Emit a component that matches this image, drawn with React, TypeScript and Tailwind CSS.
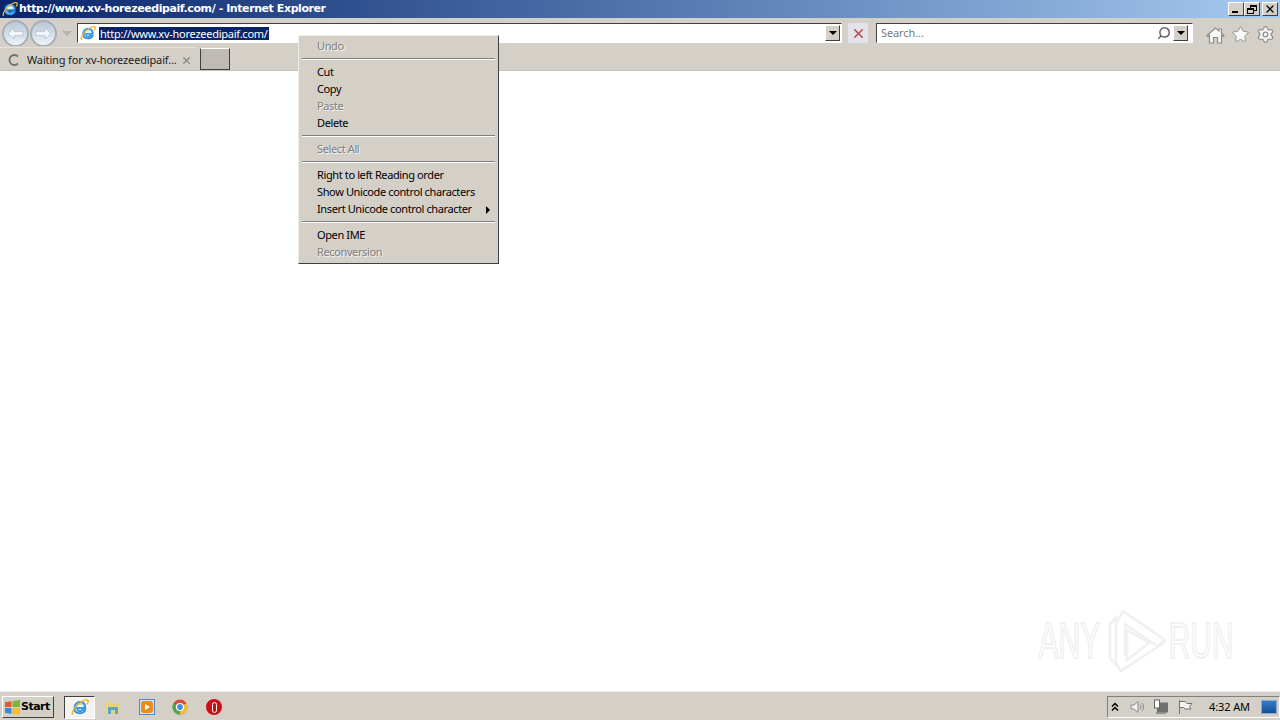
import { Search, Settings, Star, X } from "lucide-react";

function IeIcon({ size = 16 }: { size?: number }) {
  return (
    <svg width={size} height={size} viewBox="0 0 16 16" fill="none">
      <path d="M4 9h8.800c.2-3.300-1.700-5.500-4.500-5.500-3 0-5.300 2.300-5.300 5.300 0 2.900 2 4.800 5 4.800 2.300 0 4-1 4.700-2.900H9.800c-.4.700-1 1-1.700 1-1.300 0-2.100-.8-2.200-1.700" fill="#a8d8f4" stroke="#2b8fdc" strokeWidth="1.500" />
      <rect x="5.500" y="6.200" width="5" height="1.500" fill="#fff" />
      <path d="M1.500 15C-.2 12.500 5 6 9 3.500c3-1.900 6-2.600 6.300-1 .2 1-.6 2.300-1.300 3.200" stroke="#eeb52f" strokeWidth="1.300" />
    </svg>
  );
}

function NavButton({ flip }: { flip?: boolean }) {
  return (
    <div className="w-[27px] h-[27px] rounded-full border-[2px] border-[#a8aeb6] bg-gradient-to-b from-[#b9c8d8] to-[#eef3f7] flex items-center justify-center shrink-0">
      <svg width="17" height="13" viewBox="0 0 17 13" className={flip ? "rotate-180" : ""}>
        <path d="M7 .8 1 6.500 7 12.200V8.700h9V4.300H7Z" fill="#f4f7fa" stroke="#aebccb" strokeWidth=".8" />
      </svg>
    </div>
  );
}

function ComboArrow() {
  return (
    <div className="w-[15px] h-[16px] bg-[#d4d0c8] border border-t-white border-l-white border-r-[#404040] border-b-[#404040] flex items-center justify-center shrink-0">
      <div className="w-0 h-0 border-x-[4px] border-x-transparent border-t-[4px] border-t-black" />
    </div>
  );
}

function WinButton({ children, ml }: { children: React.ReactNode; ml: string }) {
  return (
    <div className={`w-[16px] h-[14px] bg-[#d4d0c8] border border-t-white border-l-white border-r-[#404040] border-b-[#404040] flex items-center justify-center ${ml}`}>
      {children}
    </div>
  );
}

function TitleBar() {
  return (
    <div className="h-[18px] flex items-center bg-gradient-to-r from-[#0a246a] to-[#a6caf0] pl-[2px] pr-[2px] shrink-0">
      <IeIcon />
      <span className="ml-[1px] mt-[1px] font-['DejaVu_Sans',sans-serif] font-bold text-[11px] tracking-[-0.42px] text-white whitespace-nowrap">
        http://www.xv-horezeedipaif.com/ - Internet Explorer
      </span>
      <div className="ml-auto flex items-center">
        <WinButton ml="">
          <div className="w-[6px] h-[2px] bg-black mt-[6px] mr-[2px]" />
        </WinButton>
        <WinButton ml="">
          <div className="relative w-[10px] h-[9px]">
            <div className="absolute right-0 top-0 w-[7px] h-[6px] border border-black border-t-2" />
            <div className="absolute left-0 bottom-0 w-[7px] h-[6px] border border-black border-t-2 bg-[#d4d0c8]" />
          </div>
        </WinButton>
        <WinButton ml="ml-[2px]">
          <X size={12} strokeWidth={2.500} color="#000" />
        </WinButton>
      </div>
    </div>
  );
}

function AddressRow() {
  return (
    <div className="h-[28px] bg-[#d4d0c8] flex items-center shrink-0 pl-[2px] pt-[2px] text-[11px]">
      <NavButton />
      <div className="ml-[1px]">
        <NavButton flip />
      </div>
      <div className="ml-[5px] w-0 h-0 border-x-[5px] border-x-transparent border-t-[5px] border-t-[#b4b4b4]" />
      <div className="ml-[5px] w-[765px] h-[20px] bg-white border border-t-[#404040] border-l-[#404040] border-b-white border-r-white flex items-center pl-[2px] pr-[1px]">
        <IeIcon />
        <span className="ml-[3px] bg-[#0a246a] text-white px-[1px] leading-[13px] tracking-[-0.25px] whitespace-nowrap">http://www.xv-horezeedipaif.com/</span>
        <div className="ml-auto">
          <ComboArrow />
        </div>
      </div>
      <div className="ml-[6px] w-[20px] h-[20px] bg-[#e4e2ea] rounded-[2px] flex items-center justify-center">
        <X size={15} strokeWidth={2.500} color="#b84a50" />
      </div>
      <div className="ml-[8px] w-[317px] h-[20px] bg-white border border-t-[#404040] border-l-[#404040] border-b-white border-r-white flex items-center pl-[4px] pr-[4px]">
        <span className="text-[#7a7a7a] tracking-[-0.1px]">Search...</span>
        <Search size={14} color="#606060" className="ml-auto mr-[2px] -scale-x-100" strokeWidth={2.500} />
        <ComboArrow />
      </div>
      <div className="ml-[13px] flex items-center gap-[6px] mt-[3px]">
        <svg width="19" height="18" viewBox="0 0 19 18" fill="#f8f8f8" stroke="#8c8c8c" strokeWidth="1.200">
          <path d="M1 9.500 9.500 2 13 5V3h2.500v4.200L18 9.500l-1 1-1.500-1.200V17h-4v-5.500h-4V17h-4V9.300L2 10.500Z" />
        </svg>
        <Star size={19} color="#8f8f8f" fill="#f8f8f8" strokeWidth={1.200} />
        <Settings size={19} color="#8f8f8f" fill="#f4f4f4" strokeWidth={1.500} />
      </div>
    </div>
  );
}

function TabRow() {
  return (
    <div className="h-[25px] bg-[#d4d0c8] border-b border-[#c8c4bc] flex items-end shrink-0 text-[11px]">
      <div className="w-[196px] h-[23px] border-t border-[#e4e1db] flex items-center pl-[8px] pr-[4px] pt-[2px]">
        <svg width="12" height="12" viewBox="0 0 12 12" fill="none">
          <path d="M10 2.500A5 5 0 1 0 10 9.500" stroke="#6f6f6f" strokeWidth="1.800" />
        </svg>
        <span className="ml-[7px] text-[#202020] tracking-[-0.15px] whitespace-nowrap">Waiting for xv-horezeedipaif...</span>
        <X size={11} strokeWidth={3} color="#8a8a8a" className="ml-auto" />
      </div>
      <div className="ml-[4px] w-[30px] h-[22px] bg-[#bfbab4] border border-t-white border-l-[#404040] border-r-[#404040] border-b-[#404040]" />
    </div>
  );
}

function MenuItem({ label, disabled, arrow }: { label: string; disabled?: boolean; arrow?: boolean }) {
  return (
    <div className={`h-[17px] flex items-center pl-[16px] pr-[6px] tracking-[-0.38px] whitespace-nowrap ${disabled ? "text-[#808080] [text-shadow:1px_1px_0_#f4f4f4]" : "text-black"}`}>
      {label}
      {arrow && <div className="ml-auto w-0 h-0 border-y-[4px] border-y-transparent border-l-[4px] border-l-black" />}
    </div>
  );
}

function MenuSep() {
  return (
    <div className="h-[9px] pt-[3px] px-[1px]">
      <div className="w-full h-[2px] border-t border-t-[#808080] border-b border-b-white" />
    </div>
  );
}

function ContextMenu() {
  return (
    <div className="absolute left-[298px] top-[35px] w-[201px] bg-[#d4d0c8] border border-t-[#f0eee9] border-l-[#f0eee9] border-r-[#404040] border-b-[#404040] p-[2px] text-[11px]">
      <MenuItem label="Undo" disabled />
      <MenuSep />
      <MenuItem label="Cut" />
      <MenuItem label="Copy" />
      <MenuItem label="Paste" disabled />
      <MenuItem label="Delete" />
      <MenuSep />
      <MenuItem label="Select All" disabled />
      <MenuSep />
      <MenuItem label="Right to left Reading order" />
      <MenuItem label="Show Unicode control characters" />
      <MenuItem label="Insert Unicode control character" arrow />
      <MenuSep />
      <MenuItem label="Open IME" />
      <MenuItem label="Reconversion" disabled />
    </div>
  );
}

function WatermarkWord({ text }: { text: string }) {
  return (
    <div className="w-[62px] flex justify-center">
      <span className="scale-x-[0.6] text-transparent [-webkit-text-stroke:2px_#f0f0f0] whitespace-nowrap">{text}</span>
    </div>
  );
}

function Watermark() {
  return (
    <div className="absolute left-[1038px] top-[610px] h-[62px] flex items-center font-['Liberation_Sans',sans-serif] text-[50px] leading-none select-none">
      <WatermarkWord text="ANY" />
      <svg width="62" height="62" viewBox="0 0 62 62" fill="none" stroke="#f0f0f0" strokeWidth="2.500" className="ml-[7px] mr-[1px]">
        <path d="M10 12 16 1 58 30 50 36 18 14V46" />
        <path d="M3 14 9 8V54L14 61 58 32" />
        <path d="M20 20 42 33 20 50Z" />
        <path d="M3 14V48L10 56" />
      </svg>
      <WatermarkWord text="RUN" />
    </div>
  );
}

function Taskbar() {
  return (
    <div className="h-[29px] bg-[#d4d0c8] border-t border-[#f2f0ec] flex items-center shrink-0 pl-[2px] pt-[2px]">
      <div className="w-[52px] h-[22px] border border-t-white border-l-white border-r-[#404040] border-b-[#404040] flex items-center pl-[1px]">
        <svg width="17" height="17" viewBox="0 0 16 16">
          <path d="M1 3 7 2V7.500H1Z" fill="#e2592a" />
          <path d="M8 2 15 1V7.500H8Z" fill="#7fb43a" />
          <path d="M1 8.500H7V14L1 13Z" fill="#3a86d8" />
          <path d="M8 8.500H15V15L8 14Z" fill="#f0c030" />
        </svg>
        <span className="font-['DejaVu_Sans',sans-serif] font-bold text-[11px] tracking-[-0.5px] text-black">Start</span>
      </div>
      <div className="ml-[10px] w-[31px] h-[23px] bg-[#f4f3f0] border border-t-[#404040] border-l-[#404040] border-r-white border-b-white flex items-center justify-center">
        <IeIcon size={18} />
      </div>
      <div className="ml-[9px] flex items-center gap-[17px]">
        <svg width="18" height="18" viewBox="0 0 18 18">
          <path d="M2 4h5l1 2h8v10H2Z" fill="#e8d27a" />
          <path d="M4 9h10v7h-3v-4H7v4H4Z" fill="#5aa5c8" />
        </svg>
        <div className="w-[16px] h-[16px] bg-[#d7e4f0] border border-[#4a8ad0] flex items-center justify-center">
          <div className="w-[12px] h-[12px] rounded-[3px] bg-[#ec8a1a] flex items-center justify-center">
            <div className="w-0 h-0 border-y-[3px] border-y-transparent border-l-[5px] border-l-white" />
          </div>
        </div>
        <svg width="16" height="16" viewBox="0 0 16 16">
          <circle cx="8" cy="8" r="7.500" fill="#d94a38" />
          <path d="M8 8 14.500 4.200A7.500 7.500 0 0 1 8 15.500Z" fill="#f0c030" />
          <path d="M8 8 8 15.500A7.500 7.500 0 0 1 1.500 4.200Z" fill="#4aa850" />
          <circle cx="8" cy="8" r="3.500" fill="#4a8ad8" stroke="#fff" strokeWidth="1.200" />
        </svg>
        <div className="w-[16px] h-[16px] rounded-full bg-[#cc1018] flex items-center justify-center ml-[1px]">
          <div className="w-[5px] h-[11px] rounded-full border border-white" />
        </div>
      </div>
      <div className="ml-auto w-[173px] h-[22px] border border-t-[#808080] border-l-[#808080] border-r-white border-b-white flex items-center pl-[3px] pr-[2px]">
        <svg width="8" height="10" viewBox="0 0 8 10" fill="none" stroke="#000" strokeWidth="1.500">
          <path d="M1 4.500 4 1.500 7 4.500M1 8.500 4 5.500 7 8.500" />
        </svg>
        <svg width="16" height="16" viewBox="0 0 16 16" fill="none" stroke="#8a8a8a" className="ml-[10px]">
          <path d="M2 6H5L9 2.500V13.500L5 10H2Z" fill="#f0f0f0" />
          <path d="M11 5.500C12.200 7 12.200 9 11 10.500M13 4C15 6.500 15 9.500 13 12" />
        </svg>
        <svg width="16" height="16" viewBox="0 0 16 16" className="ml-[8px]">
          <rect x="4" y="3.500" width="11" height="10" fill="#707070" />
          <rect x="1.500" y="1" width="5" height="8" fill="#fff" stroke="#606060" />
          <rect x="3" y="13" width="10" height="2" fill="#909090" />
        </svg>
        <svg width="16" height="16" viewBox="0 0 16 16" fill="#f4f4f4" stroke="#707070" className="ml-[8px]">
          <path d="M2.500 1V15M2.500 2.500H8L10 4.500H15L12.500 7.500 14 10H8L6.500 8.500H2.500" />
        </svg>
        <span className="ml-[16px] text-[11px] tracking-[-0.1px] text-black whitespace-nowrap">4:32 AM</span>
        <div className="ml-auto w-[16px] h-[14px] bg-gradient-to-b from-[#2f7fd0] to-[#1a4f90] border border-[#8aa8c8]" />
      </div>
    </div>
  );
}

export default function App() {
  return (
    <div className="relative w-[1280px] h-[720px] overflow-hidden flex flex-col bg-white font-['Noto_Sans',sans-serif]">
      <TitleBar />
      <AddressRow />
      <TabRow />
      <div className="flex-1 bg-white" />
      <Taskbar />
      <ContextMenu />
      <Watermark />
    </div>
  );
}
